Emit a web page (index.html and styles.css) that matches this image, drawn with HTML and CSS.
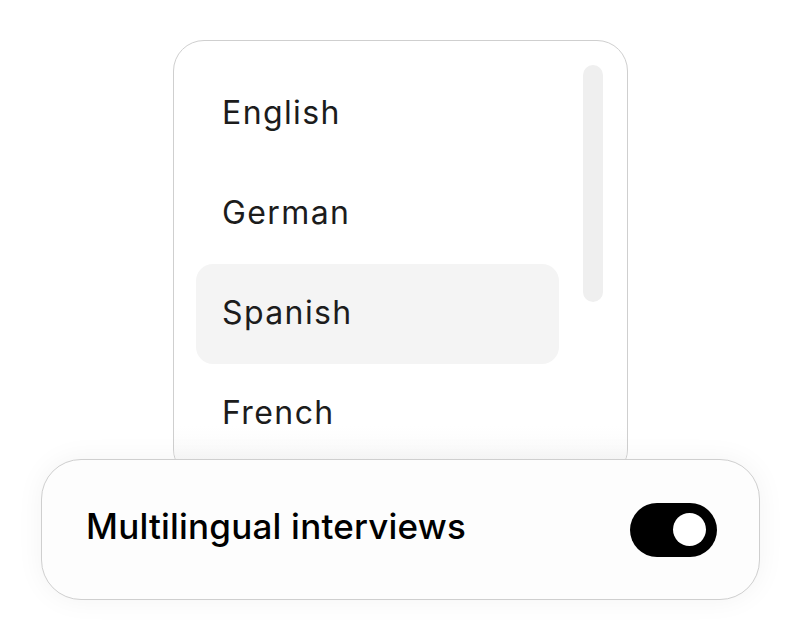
FILE: index.html
```html
<!DOCTYPE html>
<html>
<head>
<meta charset="utf-8">
<link rel="stylesheet" href="styles.css">
</head>
<body>
<div class="stage">
  <div class="picker">
    <ul class="list">
      <li class="item">English</li>
      <li class="item">German</li>
      <li class="item selected">Spanish</li>
      <li class="item">French</li>
    </ul>
    <div class="scrollbar"></div>
    <div class="fade"></div>
  </div>
  <div class="setting">
    <span class="label">Multilingual interviews</span>
    <span class="toggle"><span class="knob"></span></span>
  </div>
</div>
</body>
</html>
```
FILE: styles.css
```css
html, body {
  margin: 0;
  padding: 0;
  background: #ffffff;
}
body {
  font-family: Inter, "Noto Sans", sans-serif;
  width: 800px;
  height: 640px;
  overflow: hidden;
}
.stage {
  display: flex;
  flex-direction: column;
  padding-top: 40px;
}
.picker {
  position: relative;
  box-sizing: border-box;
  margin-left: 173px;
  width: 455px;
  height: 440px;
  border: 1px solid #cfcfcf;
  border-radius: 31px;
  background: #ffffff;
  display: flex;
  gap: 24px;
  padding: 23px 23px 0 22px;
  overflow: hidden;
}
.list {
  list-style: none;
  margin: 0;
  padding: 0;
  width: 363px;
  display: flex;
  flex-direction: column;
}
.item {
  height: 100px;
  flex: 0 0 100px;
  box-sizing: border-box;
  padding: 0 0 4px 26px;
  display: flex;
  align-items: center;
  font-size: 32px;
  letter-spacing: 1.4px;
  color: #1c1c1c;
  border-radius: 17px;
}
.item.selected {
  background: #f4f4f4;
}
.scrollbar {
  width: 20px;
  height: 237px;
  margin-top: 1px;
  border-radius: 10px;
  background: #efefef;
  flex: 0 0 20px;
}
.fade {
  position: absolute;
  left: 0;
  right: 0;
  top: 385px;
  height: 55px;
  background: linear-gradient(to bottom, rgba(255,255,255,0) 0%, rgba(250,250,250,0.92) 55%, #f7f7f7 100%);
}
.setting {
  position: relative;
  box-sizing: border-box;
  margin-top: -21px;
  margin-left: 41px;
  width: 719px;
  height: 141px;
  border: 1px solid #cfcfcf;
  border-radius: 40px;
  background: #fdfdfd;
  box-shadow: 0 0 28px rgba(0,0,0,0.05);
  display: flex;
  align-items: center;
  justify-content: space-between;
  padding: 0 42px 0 44px;
}
.label {
  font-size: 35px;
  font-weight: 500;
  color: #000000;
  letter-spacing: 0.2px;
  margin-bottom: 8px;
}
.toggle {
  width: 87px;
  height: 54px;
  border-radius: 27px;
  background: #000000;
  display: flex;
  align-items: center;
  justify-content: flex-end;
  padding-right: 11px;
  box-sizing: border-box;
}
.knob {
  width: 33px;
  height: 33px;
  border-radius: 50%;
  background: #ffffff;
}
```
